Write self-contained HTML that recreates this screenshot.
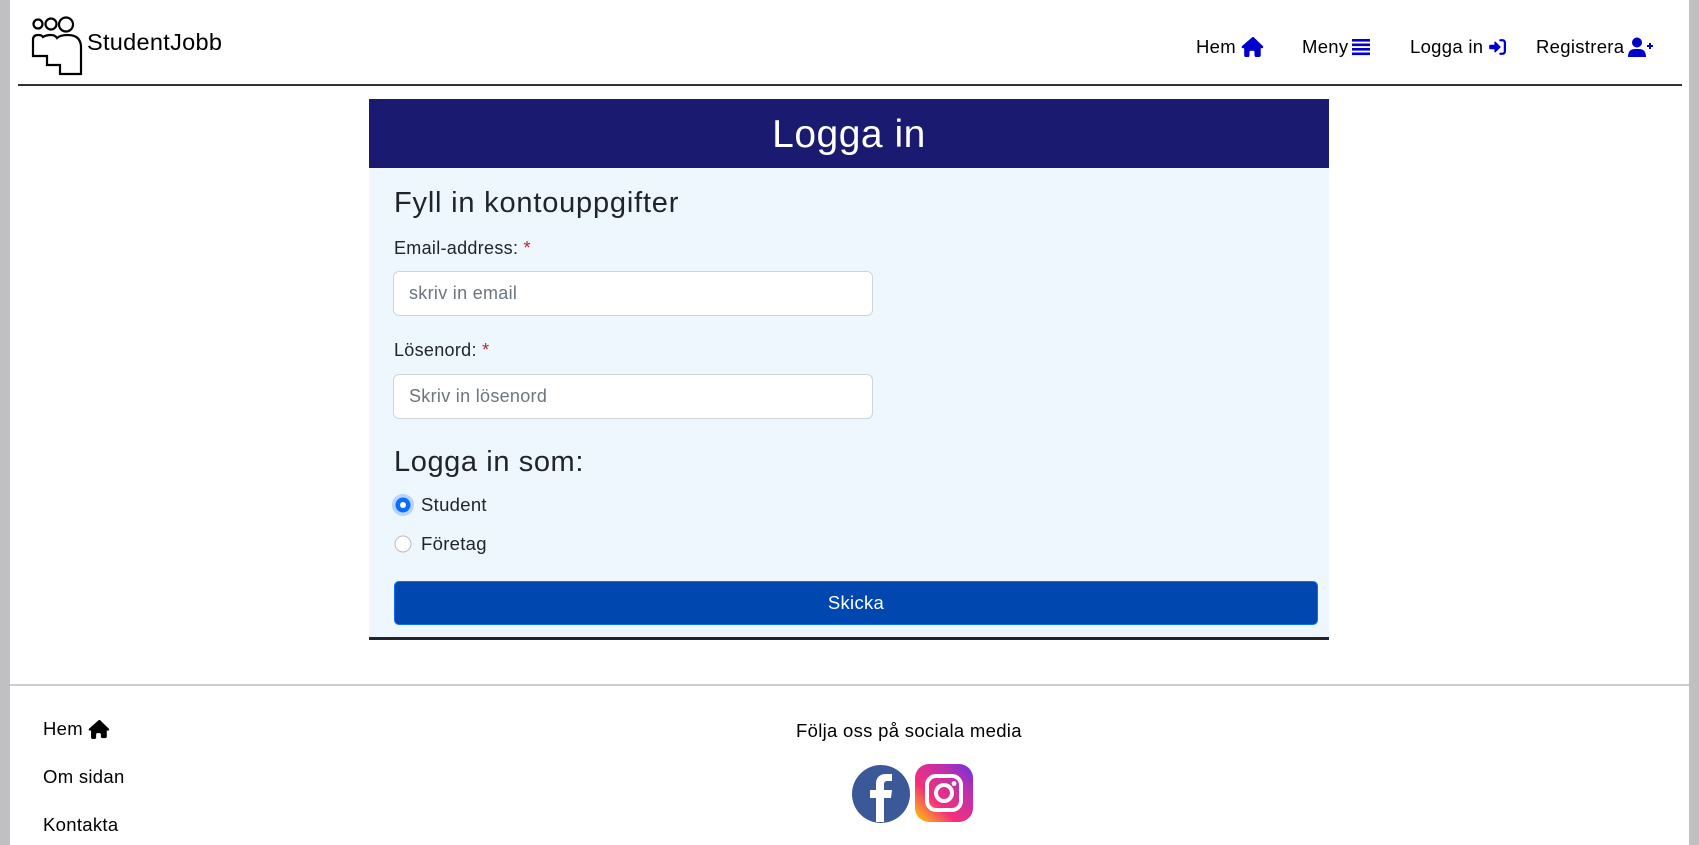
<!DOCTYPE html>
<html><head><meta charset="utf-8"><style>
*{box-sizing:border-box;margin:0;padding:0}
body{width:1699px;height:845px;overflow:hidden;background:#fff;font-family:"Liberation Sans",sans-serif;color:#212529;position:relative;letter-spacing:0.3px}
.gl{position:absolute;left:0;top:0;width:10px;height:845px;background:#c0c0c2}
.gr{position:absolute;left:1689px;top:0;width:10px;height:845px;background:#c0c0c2}
.abs{position:absolute}
.nav{position:absolute;top:36px;font-size:18.5px;color:#000;white-space:nowrap;display:flex;align-items:center;gap:4px}
.nav svg{fill:#0000cc}
.card{position:absolute;left:369px;top:99px;width:960px;height:541px;background:#eef6fe;border-bottom:3px solid #212529}
.chead{height:69px;background:#1a1a70;color:#fff;font-size:39px;text-align:center;line-height:72px;letter-spacing:0.5px}
.lbl{position:absolute;left:25px;font-size:18px}
.req{color:#b02a37}
.inp{position:absolute;left:24px;width:480px;height:45px;background:#fff;border:1px solid #ced4da;border-radius:6px;font-size:18px;color:#6c757d;padding-left:15px;line-height:43px}
.radio{position:absolute;left:25px;font-size:18.5px;display:flex;align-items:center;gap:7px}
.btn{position:absolute;left:25px;top:482px;width:924px;height:44px;background:#0048b0;border:1px solid #0d6efd;border-radius:5px;color:#fff;font-size:18.5px;text-align:center;line-height:42px}
.ft{position:absolute;left:43px;font-size:18.5px;color:#000}
</style></head><body>
<div class="gl"></div><div class="gr"></div>
<svg class="abs" style="left:30px;top:16px" width="56" height="60" viewBox="0 0 56 60" fill="none" stroke="#000" stroke-width="2.2">
<circle cx="8" cy="8" r="4.5"/><circle cx="21" cy="8" r="5.5"/><circle cx="36" cy="8.5" r="7"/>
<path d="M3 40 V24 Q3 19 8 19 Q12 19 13 21 Q16 19 21 19 Q25 19 27 22 Q30 19 38 19 Q50 19 51 30 V58 H30 V49 H17 V40 Z"/>
</svg>
<div class="abs" style="left:87px;top:29px;font-size:23.5px;color:#000">StudentJobb</div>
<div class="abs" style="left:18px;top:84px;width:1664px;height:2px;background:#333"></div>

<div class="nav" style="left:1196px">Hem <svg width="24" height="20" viewBox="0 0 576 512"><path d="M575 255c0 18-15 32-32 32h-32l1 160c0 3 0 5 0 8v16c0 22-18 40-40 40h-16c-1 0-2 0-3 0-1 0-3 0-4 0H392c-22 0-40-18-40-40V384c0-18-14-32-32-32H256c-18 0-32 14-32 32v88c0 22-18 40-40 40H128c-22 0-40-18-40-40V287H56c-18 0-32-14-32-32 0-9 3-17 10-24L290 8c7-7 15-8 22-8s15 2 21 7L564 231c8 7 12 15 11 24z"/></svg></div>
<div class="nav" style="left:1302px">Meny <svg width="18" height="18" viewBox="0 0 18 18"><rect x="0" y="1" width="18" height="2.6"/><rect x="0" y="5.5" width="18" height="2.6"/><rect x="0" y="10" width="18" height="2.6"/><rect x="0" y="14.5" width="18" height="2.6"/></svg></div>
<div class="nav" style="left:1410px">Logga in <svg width="20" height="18" viewBox="0 0 512 512"><path d="M217 105l136 136c4 4 7 9 7 15s-3 11-7 15L217 407c-4 4-9 6-14 6-11 0-20-9-20-20V320H64c-18 0-32-14-32-32V224c0-18 14-32 32-32h119V119c0-11 9-20 20-20 5 0 10 2 14 6zM352 416h64c18 0 32-14 32-32V128c0-18-14-32-32-32H352c-18 0-32-14-32-32s14-32 32-32h64c53 0 96 43 96 96V384c0 53-43 96-96 96H352c-18 0-32-14-32-32s14-32 32-32z"/></svg></div>
<div class="nav" style="left:1536px">Registrera <svg width="26" height="20" viewBox="0 0 26 20"><circle cx="9" cy="5.5" r="5"/><path d="M0 20 Q0 12 7 12 H11 Q18 12 18 20 Z"/><path d="M22 6 V12 M19 9 H25" stroke="#0000cc" stroke-width="2"/></svg></div>

<div class="card">
<div class="chead">Logga in</div>
<div class="abs" style="left:25px;top:88px;font-size:29px;letter-spacing:0.8px">Fyll in kontouppgifter</div>
<div class="lbl" style="top:139px">Email-address: <span class="req">*</span></div>
<div class="inp" style="top:172px">skriv in email</div>
<div class="lbl" style="top:241px">Lösenord: <span class="req">*</span></div>
<div class="inp" style="top:275px">Skriv in lösenord</div>
<div class="abs" style="left:25px;top:347px;font-size:29px;letter-spacing:0.6px">Logga in som:</div>
<div class="radio" style="top:395px;left:23px"><svg width="22" height="22" viewBox="0 0 22 22"><circle cx="11" cy="11" r="11" fill="#b6d4fe"/><circle cx="11" cy="11" r="7.5" fill="#0d6efd"/><circle cx="11" cy="11" r="3" fill="#fff"/></svg>Student</div>
<div class="radio" style="top:434px;left:23px"><svg width="22" height="22" viewBox="0 0 22 22"><circle cx="11" cy="11" r="8" fill="#fff" stroke="#bbb" stroke-width="1"/></svg>Företag</div>
<div class="btn">Skicka</div>
</div>

<div class="abs" style="left:10px;top:684px;width:1679px;height:2px;background:#ccc"></div>
<div class="ft" style="top:718px;display:flex;align-items:center;gap:4px">Hem <svg width="23" height="19" viewBox="0 0 576 512"><path d="M575 255c0 18-15 32-32 32h-32l1 160c0 22-18 40-40 40H392c-22 0-40-18-40-40V384c0-18-14-32-32-32H256c-18 0-32 14-32 32v88c0 22-18 40-40 40H128c-22 0-40-18-40-40V287H56c-18 0-32-14-32-32 0-9 3-17 10-24L290 8c7-7 15-8 22-8s15 2 21 7L564 231c8 7 12 15 11 24z"/></svg></div>
<div class="ft" style="top:766px">Om sidan</div>
<div class="ft" style="top:814px">Kontakta</div>
<div class="abs" style="left:796px;top:720px;font-size:18.5px;color:#000">Följa oss på sociala media</div>
<svg class="abs" style="left:851px;top:764px" width="60" height="60" viewBox="0 0 60 60"><circle cx="30" cy="30" r="29" fill="#3b5998"/><path d="M33 58V34h7l1-8h-8v-5c0-3 1-4 4-4h4v-7h-6c-7 0-10 4-10 10v6h-6v8h6v24z" fill="#fff"/></svg>
<svg class="abs" style="left:914px;top:764px" width="60" height="58" viewBox="0 0 60 58"><defs><linearGradient id="ig" x1="0" y1="1" x2="1" y2="0"><stop offset="0" stop-color="#fdd000"/><stop offset=".35" stop-color="#f5307a"/><stop offset=".7" stop-color="#c22fa8"/><stop offset="1" stop-color="#6a34e0"/></linearGradient></defs><rect x="1" y="0" width="58" height="58" rx="14" fill="url(#ig)"/><rect x="13" y="12" width="34" height="34" rx="9" fill="none" stroke="#fff" stroke-width="4"/><circle cx="30" cy="29" r="8" fill="none" stroke="#fff" stroke-width="4"/><circle cx="40" cy="19.5" r="2.4" fill="#fff"/></svg>
</body></html>
